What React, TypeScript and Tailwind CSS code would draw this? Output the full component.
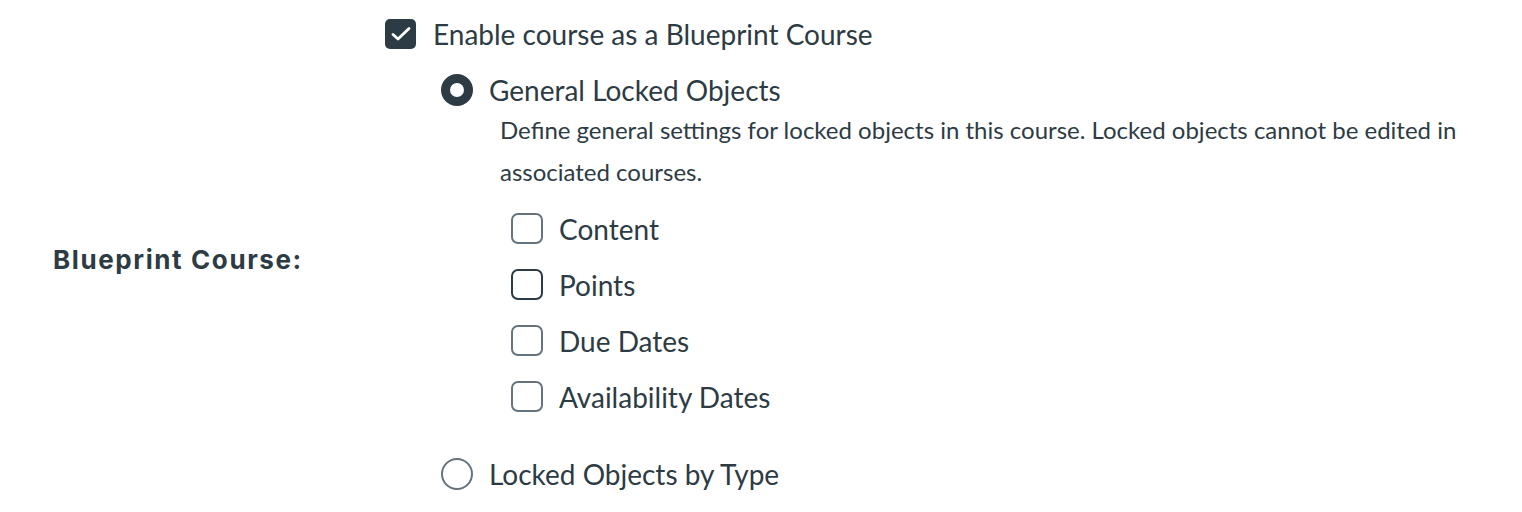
import React from 'react';

// ── Small form controls ────────────────────────────────────────────────────

function CheckBox({ checked = false, dark = false }: { checked?: boolean; dark?: boolean }) {
  if (checked) {
    return (
      <span className="flex h-[30px] w-[31px] shrink-0 items-center justify-center rounded-[5px] bg-[#2d3b45]">
        <svg width="22" height="22" viewBox="0 0 22 22" fill="none">
          <path d="M3 11.5l5 4.5L19 5.5" stroke="#fff" strokeWidth="2.8" strokeLinecap="round" strokeLinejoin="round" />
        </svg>
      </span>
    );
  }
  return (
    <span
      className={`block h-[31px] w-[32px] shrink-0 rounded-[7px] border-2 bg-white ${
        dark ? 'border-[#2d3b45]' : 'border-[#66737d]'
      }`}
    />
  );
}

function Radio({ checked = false }: { checked?: boolean }) {
  return checked ? (
    <span className="block h-[32px] w-[32px] shrink-0 rounded-full border-[9px] border-[#2d3b45] bg-white" />
  ) : (
    <span className="block h-[32px] w-[32px] shrink-0 rounded-full border-2 border-[#66737d] bg-white" />
  );
}

// ── Page ───────────────────────────────────────────────────────────────────

const LOCK_OPTIONS = [
  { label: 'Content' },
  { label: 'Points', dark: true },
  { label: 'Due Dates' },
  { label: 'Availability Dates' },
];

export default function App() {
  return (
    <div className="h-[512px] w-[1522px] overflow-hidden bg-white font-['Lato',sans-serif] text-[#2d3b45]">
      <div className="flex">
        {/* Label column */}
        <div className="flex w-[385px] shrink-0 items-center pl-[53px] pt-[10px]">
          <span className="font-['Inter',sans-serif] text-[26px] font-bold tracking-[1.6px]">Blueprint Course:</span>
        </div>

        {/* Settings column */}
        <div className="flex flex-col pt-[18px] pb-[19px]">
          <label className="flex h-[32px] items-center gap-[17px]">
            <CheckBox checked />
            <span className="text-[28px] leading-none">Enable course as a Blueprint Course</span>
          </label>

          <div className="mt-[24px] ml-[56px] flex flex-col">
            <label className="flex h-[32px] items-center gap-[16px]">
              <Radio checked />
              <span className="text-[28px] leading-none">General Locked Objects</span>
            </label>

            <p className="mt-[3px] ml-[59px] w-[980px] text-[24px] leading-[42px]">
              Define general settings for locked objects in this course. Locked objects cannot be edited in associated
              courses.
            </p>

            <div className="mt-[20px] ml-[70px] flex flex-col gap-[25px]">
              {LOCK_OPTIONS.map((o) => (
                <label key={o.label} className="flex h-[31px] items-center gap-[16px]">
                  <CheckBox dark={o.dark} />
                  <span className="text-[28px] leading-none">{o.label}</span>
                </label>
              ))}
            </div>

            <label className="mt-[46px] flex h-[32px] items-center gap-[16px]">
              <Radio />
              <span className="text-[28px] leading-none">Locked Objects by Type</span>
            </label>
          </div>
        </div>
      </div>
    </div>
  );
}
